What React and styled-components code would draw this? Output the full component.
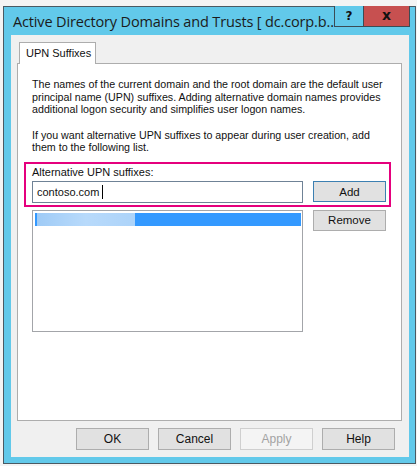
import React from "react";
import styled, { createGlobalStyle } from "styled-components";

const Global = createGlobalStyle`
  html, body { margin: 0; padding: 0; background: #f4f4f4; }
  body { width: 417px; height: 466px; overflow: hidden; }
  * { box-sizing: border-box; }
`;

const Page = styled.div`
  width: 417px;
  height: 466px;
  padding: 6px 0 0 3px;
  background: #f4f4f4;
`;

const Window = styled.div`
  width: 413px;
  height: 458px;
  border: 1px solid #4a5a63;
  background: #62c9ea;
  display: flex;
  flex-direction: column;
  padding: 0 6px 6px 7px;
`;

const TitleBar = styled.div`
  height: 28px;
  display: flex;
  align-items: flex-start;
`;

const Title = styled.div`
  flex: 1;
  min-width: 0;
  font-family: "Open Sans", "Noto Sans", sans-serif;
  font-size: 14.5px;
  color: #1b1b1b;
  padding: 5px 0 0 2px;
  white-space: nowrap;
  letter-spacing: -0.15px;
`;

const Caption = styled.div`
  display: flex;
  flex-shrink: 0;
  margin-top: -1px;
  margin-right: -1px;
`;

const CapBtn = styled.div`
  height: 21px;
  width: ${(p) => p.$w}px;
  background: ${(p) => (p.$close ? "#c75050" : "#62c9ea")};
  border: 1px solid #3b4c55;
  border-top: none;
  margin-left: ${(p) => (p.$close ? "-1px" : "0")};
  display: flex;
  align-items: center;
  justify-content: center;
  font-family: "DejaVu Sans", sans-serif;
  font-weight: bold;
  font-size: ${(p) => (p.$close ? "14px" : "12px")};
  line-height: 1;
  padding-bottom: ${(p) => (p.$close ? "2px" : "0")};
  color: #111;
`;

const Client = styled.div`
  flex: 1;
  background: #f0f0f0;
  display: flex;
  flex-direction: column;
  padding: 7px 7px 0 6px;
  font-family: "Liberation Sans", Arial, sans-serif;
  font-size: 11px;
  color: #111;
`;

const TabStrip = styled.div`
  display: flex;
  padding-left: 2px;
  height: 21px;
`;

const Tab = styled.div`
  width: 77px;
  height: 22px;
  background: #fff;
  border: 1px solid #adadad;
  border-bottom: none;
  padding: 4px 0 0 6px;
  position: relative;
  z-index: 1;
`;

const Panel = styled.div`
  height: 358px;
  background: #fff;
  border: 1px solid #adadad;
  padding: 14px 0 0 14px;
  display: flex;
  flex-direction: column;
`;

const Para = styled.p`
  margin: 0 0 ${(p) => p.$mb || 0}px 0;
  line-height: 12.5px;
  font-size: 10.7px;
  white-space: nowrap;
`;

const Highlight = styled.div`
  margin: 0 0 0 -8px;
  width: 367px;
  border: 2px solid #e5007d;
  padding: 2px 0 2px 6px;
  display: flex;
  flex-direction: column;
  gap: 3px;
`;

const Row = styled.div`
  display: flex;
  gap: 10px;
  align-items: ${(p) => p.$align || "center"};
`;

const Input = styled.div`
  width: 271px;
  height: 22px;
  border: 1px solid #6f8296;
  background: #fff;
  display: flex;
  align-items: center;
  padding-left: 4px;
`;

const Caret = styled.span`
  display: inline-block;
  width: 1px;
  height: 14px;
  background: #000;
  margin-left: 3px;
`;

const Button = styled.div`
  width: 73px;
  height: 21px;
  background: ${(p) => (p.$disabled ? "#f4f4f4" : "#e1e1e1")};
  border: 1px solid
    ${(p) => (p.$focus ? "#3c7fb1" : p.$disabled ? "#cfcfcf" : "#adadad")};
  color: ${(p) => (p.$disabled ? "#a3a3a3" : "#111")};
  display: flex;
  align-items: center;
  justify-content: center;
  font-size: 11.5px;
`;

const ListRow = styled(Row)`
  margin-top: 3px;
`;

const ListBox = styled.div`
  width: 271px;
  height: 122px;
  border: 1px solid #a3a5a9;
  background: #fff;
  padding: 2px 1px 0 2px;
`;

const Selected = styled.div`
  height: 13px;
  background: #3399ff;
  display: flex;
`;

const Redacted = styled.div`
  width: 100px;
  height: 100%;
  border-left: 2px solid #3399ff;
  background: linear-gradient(90deg, #9fcbf6 0%, #b8dafb 50%, #acd3f9 100%);
  filter: blur(0.6px);
`;

const Footer = styled.div`
  display: flex;
  justify-content: flex-end;
  gap: 9px;
  padding: 7px 7px 0 0;
`;

const FootBtn = styled(Button)`
  height: 22px;
  font-size: 12px;
`;

export default function App() {
  return (
    <>
      <Global />
      <Page>
        <Window>
          <TitleBar>
            <Title>Active Directory Domains and Trusts [ dc.corp.b...</Title>
            <Caption>
              <CapBtn $w={30}>?</CapBtn>
              <CapBtn $w={47} $close>
                x
              </CapBtn>
            </Caption>
          </TitleBar>
          <Client>
            <TabStrip>
              <Tab>UPN Suffixes</Tab>
            </TabStrip>
            <Panel>
              <Para $mb={13}>
                The names of the current domain and the root domain are the default user
                <br />
                principal name (UPN) suffixes. Adding alternative domain names provides
                <br />
                additional logon security and simplifies user logon names.
              </Para>
              <Para $mb={8}>
                If you want alternative UPN suffixes to appear during user creation, add
                <br />
                them to the following list.
              </Para>
              <Highlight>
                <span>Alternative UPN suffixes:</span>
                <Row>
                  <Input>
                    contoso.com
                    <Caret />
                  </Input>
                  <Button $focus>Add</Button>
                </Row>
              </Highlight>
              <ListRow $align="flex-start">
                <ListBox>
                  <Selected>
                    <Redacted />
                  </Selected>
                </ListBox>
                <Button>Remove</Button>
              </ListRow>
            </Panel>
            <Footer>
              <FootBtn>OK</FootBtn>
              <FootBtn>Cancel</FootBtn>
              <FootBtn $disabled>Apply</FootBtn>
              <FootBtn>Help</FootBtn>
            </Footer>
          </Client>
        </Window>
      </Page>
    </>
  );
}
